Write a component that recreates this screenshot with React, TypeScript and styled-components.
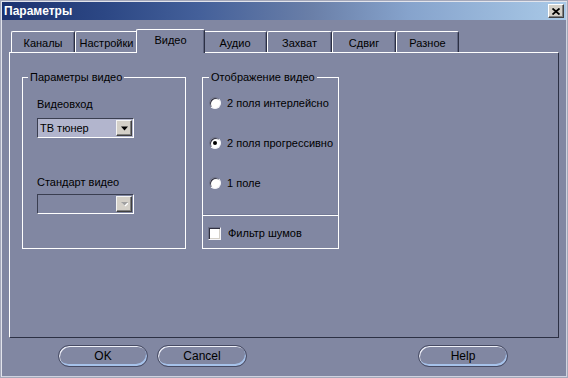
import React from "react";
import styled, { createGlobalStyle } from "styled-components";

const BG = "#8187a2";

const Global = createGlobalStyle`
  html, body { margin: 0; padding: 0; background: ${BG}; }
  body { font-family: "Liberation Sans", Arial, sans-serif; }
`;

const Window = styled.div`
  width: 568px;
  height: 378px;
  box-sizing: border-box;
  background: ${BG};
  border: 1px solid #a4a8ba;
  box-shadow: inset 1px 1px 0 #e2e4ec, inset -1px -1px 0 #d0d4e0;
  display: flex;
  flex-direction: column;
  font-size: 11px;
  line-height: 13px;
  color: #000;
  overflow: hidden;
`;

const TitleBar = styled.div`
  height: 18px;
  margin: 1px 1px 0;
  padding: 0 2px 0 2px;
  background: linear-gradient(
    90deg,
    #1b316f 0%,
    #2c4784 18%,
    #44609a 35%,
    #6a7fa8 55%,
    #86a3cc 72%,
    #a9c9e7 100%
  );
  display: flex;
  align-items: center;
  justify-content: space-between;
`;

const TitleText = styled.span`
  color: #fff;
  font-weight: bold;
  font-size: 12px;
  line-height: 14px;
`;

const CloseButton = styled.button`
  width: 16px;
  height: 14px;
  padding: 0;
  box-sizing: border-box;
  background: #d4d0c8;
  border: 1px solid;
  border-color: #ffffff #404040 #404040 #ffffff;
  box-shadow: inset -1px -1px 0 #808080;
  display: flex;
  align-items: center;
  justify-content: center;
`;

const Body = styled.div`
  padding: 9px 8px 0 8px;
  display: flex;
  flex-direction: column;
`;

const TabRow = styled.div`
  height: 23px;
  padding-left: 2px;
  display: flex;
  align-items: flex-end;
`;

const Tab = styled.div<{ $active?: boolean; $w: number }>`
  box-sizing: border-box;
  width: ${(p) => p.$w}px;
  height: ${(p) => (p.$active ? 24 : 21)}px;
  margin: ${(p) => (p.$active ? "0 -2px -1px -2px" : "0")};
  position: relative;
  z-index: ${(p) => (p.$active ? 1 : 0)};
  background: ${BG};
  border-top: 1px solid #ffffff;
  border-left: 1px solid #ffffff;
  border-right: 1px solid #2c3044;
  border-radius: 2px 2px 0 0;
  box-shadow: inset -1px 0 0 #5e6480;
  display: flex;
  align-items: center;
  justify-content: center;
  padding: ${(p) => (p.$active ? "0 0 3px 0" : "2px 0 0 0")};
  white-space: nowrap;
`;

const Panel = styled.div`
  height: 286px;
  box-sizing: border-box;
  border: 1px solid;
  border-color: #ffffff #2c3044 #2c3044 #ffffff;
  display: flex;
  align-items: flex-start;
  gap: 16px;
  padding: 18px 0 0 12px;
`;

const Group = styled.fieldset<{ $w: number; $pl: number }>`
  box-sizing: border-box;
  width: ${(p) => p.$w}px;
  height: 178px;
  margin: 0;
  min-width: 0;
  border: 1px solid #ffffff;
  padding: 0 ${(p) => p.$pl}px 0 ${(p) => p.$pl}px;
  display: flex;
  flex-direction: column;
`;

const Legend = styled.legend<{ $ml: number }>`
  padding: 0 2px;
  margin-left: ${(p) => p.$ml}px;
  font-size: 11px;
  line-height: 13px;
`;

const FieldLabel = styled.div<{ $mt: number }>`
  margin-top: ${(p) => p.$mt}px;
  height: 13px;
`;

const Select = styled.div<{ $disabled?: boolean; $mt: number }>`
  margin-top: ${(p) => p.$mt}px;
  width: 97px;
  height: 20px;
  box-sizing: border-box;
  border: 1px solid;
  border-color: #3a3e50 #ffffff #ffffff #3a3e50;
  background: ${(p) => (p.$disabled ? BG : "#b2b5cd")};
  display: flex;
  align-items: center;
  justify-content: space-between;
  padding: 0 1px 0 2px;
`;

const DropButton = styled.div`
  width: 16px;
  height: 16px;
  box-sizing: border-box;
  background: #d4d0c8;
  border: 1px solid;
  border-color: #f4f4f4 #404040 #404040 #f4f4f4;
  box-shadow: inset -1px -1px 0 #808080;
  display: flex;
  align-items: center;
  justify-content: center;
`;

const OptionRow = styled.label<{ $mt: number }>`
  margin-top: ${(p) => p.$mt}px;
  height: 14px;
  display: flex;
  align-items: center;
  gap: 6px;
  white-space: nowrap;
`;

const Radio = styled.span<{ $checked?: boolean }>`
  flex: none;
  width: 12px;
  height: 12px;
  box-sizing: border-box;
  border-radius: 50%;
  background: #ffffff;
  border: 1px solid;
  border-color: #6c7088 #f4f4f8 #f4f4f8 #6c7088;
  box-shadow: inset 1px 1px 0 #303040;
  position: relative;
  &::after {
    content: "";
    display: ${(p) => (p.$checked ? "block" : "none")};
    position: absolute;
    left: 3px;
    top: 3px;
    width: 4px;
    height: 4px;
    border-radius: 50%;
    background: #000;
  }
`;

const Checkbox = styled.span`
  flex: none;
  width: 13px;
  height: 13px;
  box-sizing: border-box;
  background: #ffffff;
  border: 1px solid;
  border-color: #6c7088 #f4f4f8 #f4f4f8 #6c7088;
  box-shadow: inset 1px 1px 0 #303040, inset -1px -1px 0 #d4d0c8;
  margin-left: -1px;
  margin-right: 1px;
`;

const Divider = styled.div<{ $mt: number; $pl: number }>`
  margin: ${(p) => p.$mt}px -${(p) => p.$pl}px 0;
  border-top: 1px solid #ffffff;
  box-shadow: 0 -1px 0 #737a96;
`;

const ButtonRow = styled.div`
  display: flex;
  gap: 9px;
  padding: 7px 51px 0 49px;
`;

const PillButton = styled.button<{ $push?: boolean }>`
  width: 90px;
  height: 22px;
  box-sizing: border-box;
  margin-left: ${(p) => (p.$push ? "auto" : "0")};
  background: ${BG};
  border: 1px solid #474b64;
  border-radius: 11px;
  box-shadow: inset 1px 1px 0 #eef0f8, inset -1px -2px 0 #a6c2ea;
  font-family: "Liberation Sans", Arial, sans-serif;
  font-size: 12px;
  color: #000;
  padding: 0;
`;

const Arrow = ({ disabled }: { disabled?: boolean }) => (
  <svg width="7" height="5" viewBox="0 0 7 5">
    {disabled ? (
      <>
        <path d="M1 1 H8 L4.5 4.5 Z" fill="#ffffff" />
        <path d="M0 0 H7 L3.5 3.5 Z" fill="#a0a0a0" />
      </>
    ) : (
      <path d="M0 0.5 H7 L3.5 4.5 Z" fill="#000" />
    )}
  </svg>
);

const CloseIcon = () => (
  <svg width="8" height="7" viewBox="0 0 8 7">
    <path d="M0.5 0.5 L7.5 6.5 M7.5 0.5 L0.5 6.5" stroke="#000" strokeWidth="1.8" />
  </svg>
);

const tabs: { label: string; w: number; active?: boolean }[] = [
  { label: "Каналы", w: 64 },
  { label: "Настройки", w: 63 },
  { label: "Видео", w: 69, active: true },
  { label: "Аудио", w: 64 },
  { label: "Захват", w: 65 },
  { label: "Сдвиг", w: 64 },
  { label: "Разное", w: 63 },
];

export default function App() {
  return (
    <>
      <Global />
      <Window>
        <TitleBar>
          <TitleText>Параметры</TitleText>
          <CloseButton aria-label="close">
            <CloseIcon />
          </CloseButton>
        </TitleBar>
        <Body>
          <TabRow>
            {tabs.map((t) => (
              <Tab key={t.label} $w={t.w} $active={t.active}>
                {t.label}
              </Tab>
            ))}
          </TabRow>
          <Panel>
            <Group $w={164} $pl={14}>
              <Legend $ml={-9}>Параметры видео</Legend>
              <FieldLabel $mt={14}>Видеовход</FieldLabel>
              <Select $mt={7}>
                <span>ТВ тюнер</span>
                <DropButton>
                  <Arrow />
                </DropButton>
              </Select>
              <FieldLabel $mt={38}>Стандарт видео</FieldLabel>
              <Select $mt={5} $disabled>
                <span />
                <DropButton>
                  <Arrow disabled />
                </DropButton>
              </Select>
            </Group>
            <Group $w={137} $pl={6}>
              <Legend $ml={0}>Отображение видео</Legend>
              <OptionRow $mt={12}>
                <Radio />
                2 поля интерлейсно
              </OptionRow>
              <OptionRow $mt={26}>
                <Radio $checked />
                2 поля прогрессивно
              </OptionRow>
              <OptionRow $mt={26}>
                <Radio />1 поле
              </OptionRow>
              <Divider $mt={25} $pl={6} />
              <OptionRow $mt={10}>
                <Checkbox />
                Фильтр шумов
              </OptionRow>
            </Group>
          </Panel>
          <ButtonRow>
            <PillButton>OK</PillButton>
            <PillButton>Cancel</PillButton>
            <PillButton $push>Help</PillButton>
          </ButtonRow>
        </Body>
      </Window>
    </>
  );
}
